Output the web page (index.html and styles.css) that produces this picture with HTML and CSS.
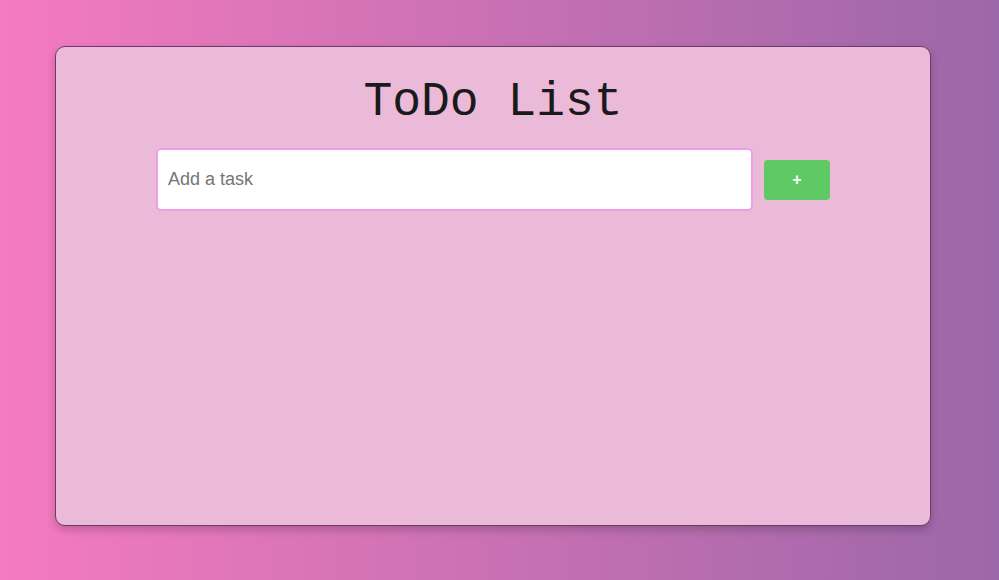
FILE: index.html
```html
<!DOCTYPE html>
<html>
<head>
<meta charset="utf-8">
<link rel="stylesheet" href="styles.css">
</head>
<body>
<div class="card">
  <h1 class="title">ToDo List</h1>
  <div class="form-row">
    <input class="task-input" type="text" placeholder="Add a task">
    <button class="add-btn">+</button>
  </div>
</div>
</body>
</html>
```
FILE: styles.css
```css
html, body {
  margin: 0;
  height: 100%;
}
body {
  background: linear-gradient(to right, #f57abf, #9c67a8);
  font-family: "Liberation Sans", Arial, sans-serif;
  padding: 46px 0 0 55px;
  box-sizing: border-box;
}
.card {
  width: 876px;
  height: 480px;
  box-sizing: border-box;
  background: #ecbad9;
  border: 1px solid #6b3c6b;
  border-radius: 10px;
  box-shadow: 0 4px 8px rgba(0, 0, 0, 0.2);
  display: flex;
  flex-direction: column;
  align-items: center;
}
.title {
  margin: 28px 0 0;
  font-family: "Liberation Mono", "Courier New", monospace;
  font-weight: normal;
  font-size: 48px;
  line-height: 54px;
  color: #1a1a1a;
}
.form-row {
  margin-top: 19px;
  display: flex;
  align-items: center;
  gap: 11px;
}
.task-input {
  width: 597px;
  height: 63px;
  box-sizing: border-box;
  border: 2px solid #ee9ee8;
  border-radius: 5px;
  padding: 0 10px;
  font-family: "Liberation Sans", Arial, sans-serif;
  font-size: 18px;
  outline: none;
  background: #fff;
}
.task-input::placeholder {
  color: #757575;
}
.add-btn {
  width: 66px;
  height: 40px;
  border: none;
  border-radius: 4px;
  background: #5fc964;
  color: #fff;
  font-family: "Liberation Sans", Arial, sans-serif;
  font-size: 16px;
  font-weight: bold;
  padding: 0;
}
```
